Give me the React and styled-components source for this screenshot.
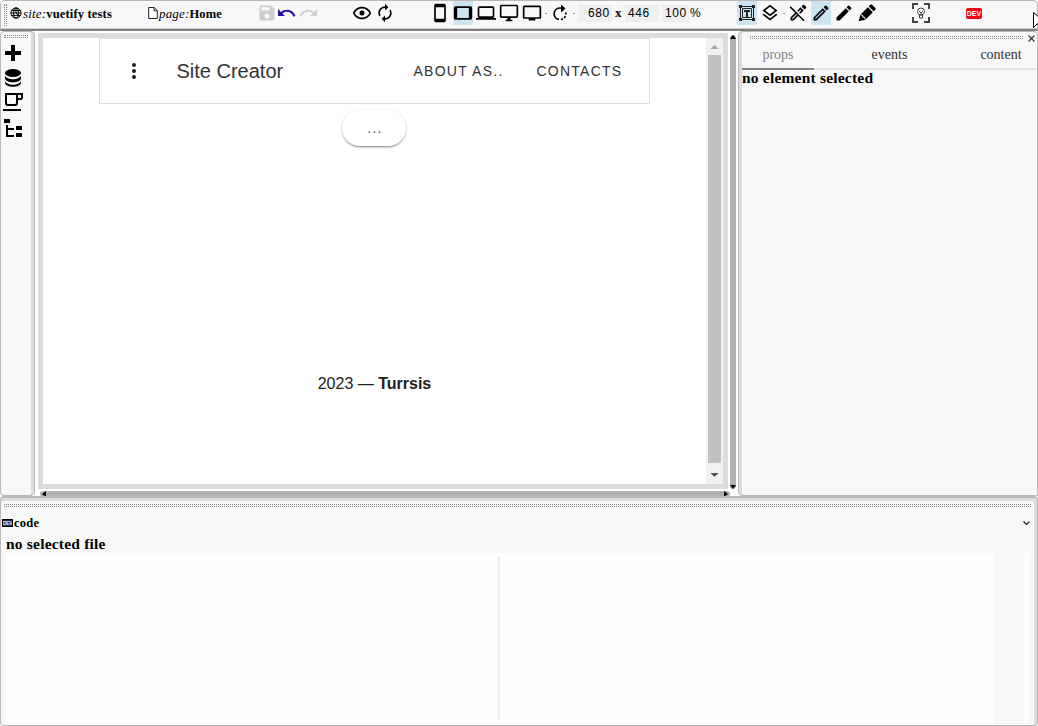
import React from 'react';
import styled, { createGlobalStyle, css } from 'styled-components';

const Global = createGlobalStyle`
  * { box-sizing: border-box; }
  body { margin: 0; background: #fff; color: #000; overflow: hidden; font-family: "Liberation Serif", serif; }
  svg { display: block; flex: none; }
`;

const Workspace = styled.div`
  width: 1038px;
  height: 726px;
  display: grid;
  grid-template-rows: 31px 465px 230px;
  background: #fff;
`;

const Toolbar = styled.header`
  display: flex;
  align-items: flex-start;
  border: 1px solid #b8b8b8;
  border-bottom: 2px solid #808080;
  border-radius: 5px 5px 0 0;
  background: #f8f8f8;
  box-shadow: inset 0 -1px #cfcfcf;
  overflow: hidden;
  height: 31px;
`;

const Slot = styled.div`
  flex: none;
  width: ${(p) => p.$w}px;
  height: 24px;
  margin-left: ${(p) => p.$gap || 0}px;
  display: flex;
  align-items: center;
  justify-content: center;
  background: ${(p) => (p.$active ? '#cce5f0' : 'transparent')};
`;

const grip = css`border: 0 dotted #858585;`;
const SideGrip = styled.div`
  ${grip}
  flex: none;
  width: 3px;
  height: 22px;
  margin: 3px 0 0 3px;
  border-width: 0 1px;
`;
const Grip = styled.div`
  ${grip}
  flex: ${(p) => (p.$grow ? 1 : 'none')};
  height: 3px;
  margin: ${(p) => p.$margin};
  border-width: 1px 0;
`;

const Label = styled.div`
  flex: none;
  width: ${(p) => p.$w}px;
  margin-left: 1px;
  line-height: 25px;
  font-size: 12.5px;
  font-weight: bold;
  letter-spacing: 0.17px;
  white-space: nowrap;
  em { font-weight: normal; font-size: 13px; }
`;

const Field = styled.div`
  flex: none;
  width: ${(p) => p.$w}px;
  height: 17px;
  margin: 4px 0 0 ${(p) => p.$gap}px;
  padding-left: ${(p) => p.$pad || 0}px;
  background: ${(p) => (p.$plain ? 'transparent' : '#efefef')};
  font: 12px/17px "Liberation Sans", sans-serif;
  letter-spacing: 0.55px;
`;
const Times = styled.b`
  flex: none;
  width: 8px;
  margin-left: 3px;
  font-size: 13px;
  line-height: 24px;
`;
const Dot = styled.i`
  flex: none;
  width: 2px;
  height: 1px;
  margin: 12px 0 0 ${(p) => p.$gap}px;
  background: #999;
`;
const DevBadge = styled.div`
  width: 16px;
  height: 11px;
  border-radius: 2px;
  background: #f50414;
  color: #fff;
  font: bold 7px/11px "Liberation Sans", sans-serif;
  text-align: center;
`;

const Middle = styled.div`
  display: grid;
  grid-template-columns: 35px 703px 300px;
  min-height: 0;
`;
const Panel = styled.section`
  display: flex;
  flex-direction: column;
  background: #f8f8f8;
  border: 1px solid #b8b8b8;
  min-height: 0;
  overflow: hidden;
`;
const ToolPanel = styled(Panel)`
  border-radius: 4px;
  box-shadow: inset -3px 0 #dcdcdc;
  svg { margin-left: 3px; }
`;

const Stage = styled.main`
  display: grid;
  grid-template-columns: 690px 10px;
  grid-template-rows: 456px 7px;
  padding: 2px 0 0 3px;
  align-content: start;
`;
const Frame = styled.div`
  display: flex;
  border: 5px solid #dddbdb;
  background: #fff;
`;
const Site = styled.div`
  width: 663px;
  display: flex;
  flex-direction: column;
  align-items: center;
  font-family: "Liberation Sans", sans-serif;
  color: #212121;
`;
const SiteHeader = styled.div`
  width: 551px;
  height: 66px;
  display: flex;
  align-items: center;
  padding-left: 32px;
  border: 1px solid #dedede;
  white-space: nowrap;
`;
const SiteTitle = styled.div`
  width: 237px;
  margin-left: 40.5px;
  font-size: 20px;
  color: #333;
`;
const SiteLink = styled.div`
  width: ${(p) => p.$w}px;
  font-size: 14px;
  letter-spacing: 1.25px;
  color: #333;
`;
const Pill = styled.div`
  width: 64px;
  height: 36px;
  margin: 6px 1px 0 0;
  padding-left: 2px;
  border-radius: 18px;
  background: #fff;
  box-shadow: 0 2px 2px -1px rgba(0,0,0,.35), 0 1px 3px rgba(0,0,0,.2);
  font-size: 14px;
  line-height: 36px;
  letter-spacing: 1.25px;
  text-align: center;
  color: #555;
`;
const Footer = styled.div`
  margin-top: 228px;
  font-size: 16px;
  line-height: 20px;
`;
const Scroll = styled.div`
  width: 17px;
  display: flex;
  flex-direction: column;
  align-items: center;
  background: #f1f1f1;
`;
const Thumb = styled.div`
  width: 13px;
  height: 408px;
  background: #c1c1c1;
`;
const VBar = styled.div`
  display: flex;
  flex-direction: column;
  justify-content: space-between;
  width: 6px;
  height: 454px;
  margin: 2px 0 0 2px;
  background: #b0b0b0;
  border-radius: 3px;
`;
const HBar = styled.div`
  display: flex;
  justify-content: space-between;
  width: 690px;
  height: 6px;
  margin: 2px 0 0 2px;
  padding: 0 2px;
  background: #b0b0b0;
  border-radius: 3px;
`;

const PropsPanel = styled(Panel)`
  border-radius: 4px 4px 0 4px;
  box-shadow: inset 3px 0 #dcdcdc;
  padding-left: 3px;
`;
const PanelTop = styled.div`
  display: flex;
  height: 13px;
  padding-right: 2px;
  svg { margin-top: 3px; }
`;
const Tabs = styled.div`
  display: flex;
  justify-content: space-between;
  height: 25px;
  border-bottom: 2px solid #e4e2e8;
`;
const Tab = styled.div`
  height: 25px;
  width: ${(p) => p.$w}px;
  border-bottom: 2px solid ${(p) => (p.$on ? '#808080' : 'transparent')};
  color: ${(p) => (p.$on ? '#808080' : '#303030')};
  font-size: 14px;
  line-height: 20px;
  text-align: center;
`;
const Message = styled.b`
  display: block;
  margin-top: ${(p) => p.$top || 0}px;
  padding-left: ${(p) => p.$pad || 0}px;
  font-size: 15.5px;
  line-height: ${(p) => p.$line || 18}px;
  letter-spacing: 0.2px;
`;

const CodePanel = styled(Panel)`
  border-top-width: 2px;
  border-radius: 4px;
  box-shadow: inset -3px 3px #dcdcdc;
`;
const CodeTitle = styled.div`
  display: flex;
  align-items: center;
  height: 14px;
  margin-top: 9px;
  padding: 0 7px 0 1px;
  font-size: 12.5px;
  font-weight: bold;
  letter-spacing: 0.25px;
  span { flex: 1; margin-left: 1px; }
`;
const Editors = styled.div`
  display: flex;
  flex: 1;
  margin-left: 5px;
`;
const Pane = styled.div`
  width: ${(p) => p.$w}px;
  margin-left: ${(p) => p.$gap || 0}px;
  background: #fefefe;
`;
const Divider = styled.div`
  width: 4px;
  background: #fefefe;
  &::before {
    content: "";
    display: block;
    height: 163px;
    margin-top: 4px;
    background: linear-gradient(to right, #fefefe, #e9e9e9);
  }
`;
const Pointer = styled.svg`
  position: absolute;
  left: 1033px;
  top: 11px;
`;
const Chip = styled.div`
  flex: none;
  width: 11px;
  height: 8px;
  border: 1px solid #000;
  background: #26304a;
  color: #dde6ff;
  font: bold 5px/6px "Liberation Sans", sans-serif;
  letter-spacing: -0.3px;
  text-align: center;
  overflow: hidden;
`;

const Svg = ({ w = 20, h, vb = 24, children, ...rest }) => (
  <svg width={w} height={h || w} viewBox={typeof vb === 'string' ? vb : `0 0 ${vb} ${vb}`} fill="currentColor" {...rest}>{children}</svg>
);
const Arrow = ({ d, color = '#000', w, h }) => (
  <svg width={w} height={h} viewBox={`0 0 ${w} ${h}`}><path d={d} fill={color} /></svg>
);

const Globe = () => (
  <Svg w={12} vb={16} fill="none" stroke="#000" strokeWidth="1.3">
    <circle cx="8" cy="8" r="6.8" /><ellipse cx="8" cy="8" rx="3.2" ry="6.8" />
    <path d="M1 8h14M2 4.6h12M2 11.4h12M8 1v7l5 5" />
  </Svg>
);
const Page = () => (
  <Svg w={10} h={12} vb="0 0 10 12" fill="#fff" stroke="#222" strokeWidth="1"><path d="M.7.5h5.6l3 3v8h-8.6zM6 .5v3.3h3.3" /></Svg>
);
const Save = () => <Svg w={20} color="#cdcdcd"><path d="M17 3H5a2 2 0 0 0-2 2v14a2 2 0 0 0 2 2h14a2 2 0 0 0 2-2V7zm-5 16a3 3 0 1 1 0-6 3 3 0 0 1 0 6zm3-10H5V5h10z" /></Svg>;
const Undo = ({ color, flip }) => (
  <Svg w={18} h={10} vb="0 0 18 10" color={color}>
    <path transform={flip ? 'matrix(-1 0 0 1 18 0)' : undefined} d="M0 1v7h7L4.5 5.5C8 2.5 13.5 3.6 15.5 8.7l2-.7C15 1.3 8-.1 3 4z" />
  </Svg>
);
const Eye = () => <Svg w={20}><path d="M12 9a3 3 0 1 0 0 6 3 3 0 0 0 0-6m0-4.5C7 4.5 2.73 7.61 1 12c1.73 4.39 6 7.5 11 7.5s9.27-3.11 11-7.5C21.27 7.61 17 4.5 12 4.5m0 13c-3.82 0-7.17-2.12-8.82-5.5C4.83 8.62 8.18 6.5 12 6.5s7.17 2.12 8.82 5.5C19.17 15.38 15.82 17.5 12 17.5" /></Svg>;
const Renew = () => <Svg w={20}><path d="M12 6v3l4-4-4-4v3c-4.42 0-8 3.58-8 8 0 1.57.46 3.03 1.24 4.26L6.7 14.8A5.9 5.9 0 0 1 6 12c0-3.31 2.69-6 6-6m6.76 1.74L17.3 9.2c.44.84.7 1.79.7 2.8 0 3.31-2.69 6-6 6v-3l-4 4 4 4v-3c4.42 0 8-3.58 8-8 0-1.57-.46-3.03-1.24-4.26" /></Svg>;
const Phone = () => <Svg w={20}><path d="M17 19H7V5h10m0-4H7a2 2 0 0 0-2 2v18a2 2 0 0 0 2 2h10a2 2 0 0 0 2-2V3a2 2 0 0 0-2-2" /></Svg>;
const Tablet = () => <Svg w={20}><path d="M19 18H5V6h14m2-2H3a2 2 0 0 0-2 2v12a2 2 0 0 0 2 2h18a2 2 0 0 0 2-2V6a2 2 0 0 0-2-2" /></Svg>;
const Laptop = () => <Svg w={20}><path d="M4 6h16v10H4m16 2a2 2 0 0 0 2-2V6a2 2 0 0 0-2-2H4a2 2 0 0 0-2 2v10a2 2 0 0 0 2 2H0v2h24v-2z" /></Svg>;
const Monitor = () => <Svg w={20}><path d="M21 16H3V4h18m0-2H3a2 2 0 0 0-2 2v12a2 2 0 0 0 2 2h7v2H8v2h8v-2h-2v-2h7a2 2 0 0 0 2-2V4a2 2 0 0 0-2-2" /></Svg>;
const Tv = () => <Svg w={20}><path d="M21 17H3V5h18m0-2H3a2 2 0 0 0-2 2v12a2 2 0 0 0 2 2h5v2h8v-2h5a2 2 0 0 0 2-2V5a2 2 0 0 0-2-2" /></Svg>;
const Rotate = () => (
  <Svg w={16} vb={16} fill="none" stroke="#000" strokeWidth="1.7">
    <path d="M7 14.5A5.8 5.8 0 0 1 7.500 3h4M9 14.500l2-.6M12.300 12.900l1.200-1.600M13.900 9.500V7.500" />
    <path d="M9 -.5 13.500 3.500 9 7.500z" fill="#000" stroke="none" />
  </Svg>
);
const TextBox = () => (
  <Svg w={16} vb={16} fill="none" stroke="#222" strokeWidth="1">
    <path d="M2.5 1.5h11M2.5 14.5h11M1.5 2.5v11M14.5 2.5v11M3.5 3.5h9v9h-9z" />
    <path fill="#222" stroke="none" d="M0 0h3v3H0zM13 0h3v3h-3zM0 13h3v3H0zM13 13h3v3h-3zM5 5h6v2H9v5H7V7H5z" />
  </Svg>
);
const Layers = () => <Svg w={20}><path d="m12 18.54 7.37-5.74L21 14.07l-9 7-9-7 1.62-1.26zM12 16 3 9l9-7 9 7zm0-11.47L6.26 9 12 13.47 17.74 9z" /></Svg>;
const Pencil = ({ outline }) => (
  <Svg w={20}>
    {outline
      ? <path d="m14.06 9 .94.94L5.92 19H5v-.92zm3.6-6c-.25 0-.51.1-.7.29l-1.83 1.83 3.75 3.75 1.83-1.83c.39-.39.39-1.04 0-1.41l-2.34-2.34A1 1 0 0 0 17.66 3m-3.6 3.19L3 17.25V21h3.75L17.81 9.94z" />
      : <path d="m20.71 7.04c.39-.39.39-1.04 0-1.41l-2.34-2.34a1 1 0 0 0-1.41 0l-1.84 1.83 3.75 3.75M3 17.25V21h3.75L17.81 9.93l-3.75-3.75z" />}
  </Svg>
);
const PencilOff = () => (
  <Svg w={20}>
    <path d="M18.66 2c-.25 0-.51.1-.7.29l-1.83 1.83 3.75 3.75 1.83-1.83c.39-.39.39-1.02 0-1.41l-2.34-2.34a1 1 0 0 0-.71-.29M3.28 4 2 5.28l6.5 6.5L3 17.25V21h3.75l5.48-5.48 6.49 6.48L20 20.75l-6.5-6.5-4-4zm11.78 1.19-4.03 4.03 1.41 1.41 2.62-2.62.94.94-2.62 2.62 1.41 1.41 4.02-4.04M9.92 13.19l.92.92L5.92 19H5v-.92z" />
  </Svg>
);
const Marker = () => <Svg w={20}><path d="M2 22 4 14 13 5l6 6-9 9zM14 4l2-2q1-1 2 0l4 4q1 1 0 2l-2 2z" /><path d="m4 14 3 1v2h2l1 3" fill="none" stroke="#f8f8f8" strokeWidth="1.2" /></Svg>;
const FocusBulb = () => (
  <Svg w={18} h={20} vb="0 0 18 20" fill="none" stroke="#444" strokeWidth="2">
    <path d="M1 6V1h5M12 1h5v5M17 14v5h-5M6 19H1v-5" />
    <circle cx="9" cy="8.5" r="3.5" strokeWidth="1" /><path d="M7.5 12v3h3v-3M7 8l2 2 2-2M9 10v3" strokeWidth="1" />
  </Svg>
);
const Plus = () => <Svg w={18} h={25} vb="0 0 18 25"><path d="M7 5h4v6h6v4h-6v6H7v-6H1v-4h6z" /></Svg>;
const Database = () => (
  <Svg w={18} h={25} vb="0 0 18 25"><ellipse cx="9" cy="8" rx="8" ry="4" /><path d="M1 10.5c2 5 14 5 16 0v3c-1 5-15 5-16 0zM1 16c2 5 14 5 16 0v2c-1 5-15 5-16 0z" /></Svg>
);
const Cup = () => (
  <Svg w={20} h={25} vb="1 0 20 25" fill="none" stroke="#000" strokeWidth="2" overflow="visible"><path d="M3 4h11v9q0 2-2 2H5q-2 0-2-2zM14 4h5v4l-1 1h-4M0 20h18" /></Svg>
);
const Tree = () => (
  <Svg w={18} h={25} vb="0 0 18 25"><path d="M0 4h6v4H0zM12 11h6v4h-6zM12 18h6v4h-6zM2 10h2v3h6v2H4v5h6v2H2z" /></Svg>
);
const Kebab = () => (
  <Svg w={4} h={16} vb="0 0 4 16"><circle cx="2" cy="2" r="2" /><circle cx="2" cy="8" r="2" /><circle cx="2" cy="14" r="2" /></Svg>
);

export default function App() {
  return (
    <>
      <Global />
      <Workspace>
        <Toolbar>
          <SideGrip />
          <Slot $w={12} $gap={3}><Globe /></Slot>
          <Label $w={125}><em>site:</em>vuetify tests</Label>
          <Slot $w={10}><Page /></Slot>
          <Label $w={99}><em>page:</em>Home</Label>
          <Slot $w={20} $gap={-1}><Save /></Slot>
          <Slot $w={18} $gap={1}><Undo color="#28109c" /></Slot>
          <Slot $w={18} $gap={3}><Undo color="#d2d2d2" flip /></Slot>
          <Slot $w={20} $gap={35}><Eye /></Slot>
          <Slot $w={20} $gap={3}><Renew /></Slot>
          <Slot $w={20} $gap={35}><Phone /></Slot>
          <Slot $w={20} $gap={3} $active><Tablet /></Slot>
          <Slot $w={20} $gap={3}><Laptop /></Slot>
          <Slot $w={20} $gap={3}><Monitor /></Slot>
          <Slot $w={20} $gap={3}><Tv /></Slot>
          <Dot $gap={3} />
          <Slot $w={20} $gap={3}><Rotate /></Slot>
          <Dot $gap={3} />
          <Field $w={34} $gap={3} $pad={10}>680</Field>
          <Times>x</Times>
          <Field $w={34} $gap={2} $pad={3}>446</Field>
          <Field $w={27} $gap={3} $pad={3}>100</Field>
          <Field $w={14} $gap={1} $plain>%</Field>
          <Slot $w={20} $gap={33} $active><TextBox /></Slot>
          <Slot $w={20} $gap={3}><Layers /></Slot>
          <Dot $gap={3} />
          <Slot $w={20} $gap={3}><PencilOff /></Slot>
          <Slot $w={20} $gap={3} $active><Pencil outline /></Slot>
          <Slot $w={20} $gap={3}><Pencil /></Slot>
          <Slot $w={20} $gap={3}><Marker /></Slot>
          <Slot $w={18} $gap={35}><FocusBulb /></Slot>
          <Slot $w={16} $gap={36}><DevBadge>DEV</DevBadge></Slot>
        </Toolbar>

        <Middle>
          <ToolPanel>
            <Grip $margin="3px 6px 2px 3px" />
            <Plus /><Database /><Cup /><Tree />
          </ToolPanel>
          <Stage>
            <Frame>
              <Site>
                <SiteHeader>
                  <Kebab />
                  <SiteTitle>Site Creator</SiteTitle>
                  <SiteLink $w={123}>ABOUT AS..</SiteLink>
                  <SiteLink $w={90}>CONTACTS</SiteLink>
                </SiteHeader>
                <Pill>...</Pill>
                <Footer>2023 — <b>Turrsis</b></Footer>
              </Site>
              <Scroll>
                <Arrow w={17} h={17} color="#a3a3a3" d="M4.5 11 8.5 7l4 4z" />
                <Thumb />
                <Arrow w={17} h={21} color="#505050" d="M4.5 10h8l-4 4z" />
              </Scroll>
            </Frame>
            <VBar>
              <Arrow w={6} h={5} d="M0 4 3 0l3 4z" />
              <Arrow w={6} h={5} d="M0 1h6L3 5z" />
            </VBar>
            <HBar>
              <Arrow w={4} h={6} d="M4 0v6L0 3z" />
              <Arrow w={4} h={6} d="M0 0v6l4-3z" />
            </HBar>
          </Stage>
          <PropsPanel>
            <PanelTop>
              <Grip $grow $margin="4px 5px 0 8px" />
              <Svg w={7} vb={7}><path d="m.5.5 6 6m0-6-6 6" fill="none" stroke="#333" strokeWidth="1.2" /></Svg>
            </PanelTop>
            <Tabs>
              <Tab $w={72} $on>props</Tab>
              <Tab $w={72}>events</Tab>
              <Tab $w={72}>content</Tab>
            </Tabs>
            <Message $line={16}>no element selected</Message>
          </PropsPanel>
        </Middle>

        <CodePanel>
          <Grip $margin="6px 6px 0 3px" />
          <CodeTitle>
            <Chip>DEV</Chip><span>code</span>
            <Svg w={7} h={5} vb="0 0 7 5"><path d="m.5.5 3 3 3-3" fill="none" stroke="#222" strokeWidth="1.2" /></Svg>
          </CodeTitle>
          <Message $pad={5} $top={5}>no selected file</Message>
          <Editors>
            <Pane $w={490} />
            <Divider />
            <Pane $w={494} />
            <Pane $w={5} $gap={30} />
          </Editors>
        </CodePanel>
      </Workspace>
      <Pointer width="12" height="20" viewBox="0 0 12 20"><path d="M.5 1.5v15l4-4 3 7 3-1-3-7h5z" fill="#fff" stroke="#000" /></Pointer>
    </>
  );
}
